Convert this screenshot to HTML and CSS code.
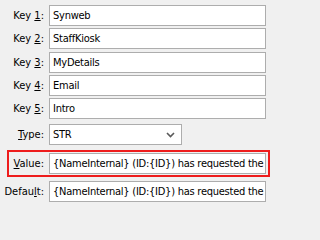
FILE: index.html
```html
<!DOCTYPE html>
<html>
<head>
<meta charset="utf-8">
<link rel="stylesheet" href="styles.css">
</head>
<body>
<div class="form">
  <div class="row"><span class="label">Key <u>1</u>:</span><div class="field">Synweb</div></div>
  <div class="row"><span class="label">Key <u>2</u>:</span><div class="field">StaffKiosk</div></div>
  <div class="row row-gap"><span class="label">Key <u>3</u>:</span><div class="field">MyDetails</div></div>
  <div class="row"><span class="label">Key <u>4</u>:</span><div class="field">Email</div></div>
  <div class="row"><span class="label">Key <u>5</u>:</span><div class="field">Intro</div></div>
  <div class="row row-type"><span class="label"><u>T</u>ype:</span><div class="field combo"><span>STR</span><svg class="chev" width="9" height="6" viewBox="0 0 9 6"><polyline points="1,1 4.5,4.5 8,1" fill="none" stroke="#5a5a5a" stroke-width="1.6"/></svg></div></div>
  <div class="row row-value highlight"><span class="label"><u>V</u>alue:</span><div class="field">{NameInternal} (ID:{ID}) has requested the</div></div>
  <div class="row row-default"><span class="label">Defau<u>l</u>t:</span><div class="field">{NameInternal} (ID:{ID}) has requested the</div></div>
</div>
</body>
</html>
```
FILE: styles.css
```css
html, body {
  margin: 0;
  padding: 0;
  background: #f0f0f0;
  width: 271px;
  height: 202px;
  overflow: hidden;
}
body {
  font-family: "DejaVu Sans Condensed", "DejaVu Sans", sans-serif;
  font-size: 11px;
  color: #000;
}
.form {
  display: flex;
  flex-direction: column;
  gap: 2px;
  padding-top: 5px;
}
.row {
  display: flex;
  align-items: center;
  height: 21px;
}
.row-gap { margin-top: 1px; }
.row-type { margin-top: 3px; }
.row-value { margin-top: 6px; }
.row-default { margin-top: 5px; }
.label {
  width: 49px;
  box-sizing: border-box;
  padding-right: 5px;
  text-align: right;
  white-space: nowrap;
}
.label u { text-underline-offset: 1px; }
.field {
  box-sizing: border-box;
  width: 217px;
  height: 21px;
  line-height: 19px;
  border: 1px solid #adadad;
  background: #fff;
  padding-left: 3px;
  white-space: nowrap;
  overflow: hidden;
  letter-spacing: -0.25px;
}
.combo {
  width: 133px;
  display: flex;
  align-items: center;
  justify-content: space-between;
  padding-right: 6px;
}
.highlight { position: relative; }
.highlight::after {
  content: "";
  position: absolute;
  left: 7px;
  right: 1px;
  top: -3px;
  bottom: -3px;
  border: 2px solid #ee1c1c;
  pointer-events: none;
}
```
